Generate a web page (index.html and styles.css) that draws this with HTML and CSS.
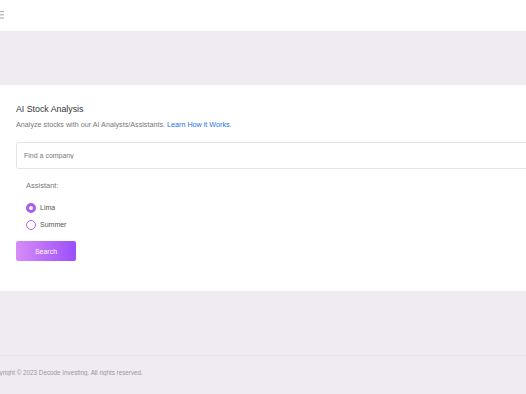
FILE: index.html
```html
<!DOCTYPE html>
<html lang="en">
<head>
    <meta charset="UTF-8">
    <meta name="viewport" content="width=device-width, initial-scale=1.0">
    <title>AI Stock Analysis</title>
    <link rel="stylesheet" href="styles.css">
</head>
<body>

    <!-- top bar -->
    <header class="topbar">
        <svg class="menu-icon" width="10" height="8" viewBox="0 0 10 8">
            <rect x="0" y="0" width="10" height="1.2" fill="#aeb4bd"/>
            <rect x="0" y="3.2" width="10" height="1.2" fill="#aeb4bd"/>
            <rect x="0" y="6.4" width="10" height="1.2" fill="#aeb4bd"/>
        </svg>
    </header>

    <div class="band"></div>

    <!-- search card -->
    <section class="card">
        <h1 class="title">AI Stock Analysis</h1>
        <p class="subtitle">Analyze stocks with our AI Analysts/Assistants. <a href="#">Learn How it Works.</a></p>

        <input class="search-input" type="text" placeholder="Find a company">

        <div class="assistants">
            <p class="label">Assistant:</p>
            <label class="radio-row">
                <span class="radio checked"></span>
                <span>Lima</span>
            </label>
            <label class="radio-row">
                <span class="radio"></span>
                <span>Summer</span>
            </label>
        </div>

        <button class="search-btn">Search</button>
    </section>

    <div class="spacer"></div>

    <footer class="footer">
        <p>Copyright © 2023 Decode Investing. All rights reserved.</p>
    </footer>

</body>
</html>
```

FILE: styles.css
```css
/* page */
body {
    margin: 0;
    padding: 0;
    font-family: "Liberation Sans", Arial, sans-serif;
    background-color: #f0ebf2;
    overflow: hidden;
}

.topbar {
    height: 31px;
    background-color: #fff;
    display: flex;
    align-items: center;
}

.menu-icon {
    margin-left: -6px;
    margin-top: -2px;
}

.band {
    height: 54px;
}

.card {
    background-color: #fff;
    padding: 18px 0 30px 16px;
}

.title {
    margin: 0;
    font-size: 8.8px;
    font-weight: normal;
    color: #333;
    line-height: 12px;
}

.subtitle {
    margin: 5px 0 0;
    font-size: 7.2px;
    line-height: 10px;
    color: #777;
}

.subtitle a {
    color: #1a73e8;
    text-decoration: none;
}

.search-input {
    display: block;
    box-sizing: border-box;
    width: 530px;
    height: 27px;
    margin-top: 12px;
    padding: 0 7px;
    border: 1px solid #e3e3e3;
    border-radius: 3px 0 0 3px;
    font-family: inherit;
    font-size: 7px;
    outline: none;
}

.search-input::placeholder {
    color: #777;
}

.assistants {
    padding-left: 10px;
    margin-top: 12px;
}

.label {
    margin: 0 0 8px;
    font-size: 7.5px;
    line-height: 10px;
    color: #777;
}

.radio-row {
    display: flex;
    align-items: center;
    gap: 4px;
    height: 17px;
    font-size: 7px;
    color: #555;
}

.radio {
    box-sizing: border-box;
    width: 10px;
    height: 10px;
    border-radius: 50%;
    border: 1.3px solid #b063f7;
    background-color: #fff;
}

.radio.checked {
    border: 3px solid #a85cf5;
    background-color: #fff;
}

.search-btn {
    display: block;
    width: 60px;
    height: 20px;
    margin-top: 8px;
    border: none;
    border-radius: 2px;
    background: linear-gradient(90deg, #d88cf7, #9a4ff9);
    color: #fff;
    font-family: inherit;
    font-size: 7px;
}

.spacer {
    height: 64px;
    border-bottom: 1px solid #e8e3ea;
}

.footer p {
    margin: 13px 0 0 -12px;
    font-size: 6.3px;
    color: #999;
}
```
